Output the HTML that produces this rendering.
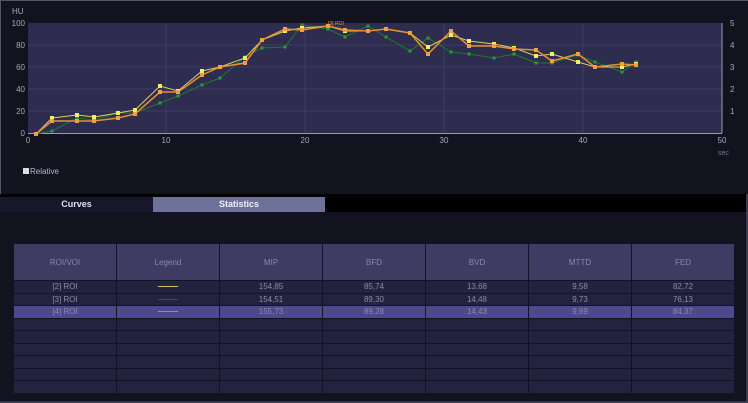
<!DOCTYPE html>
<html><head><style>
body{margin:0;width:748px;height:403px;background:#13121f;font-family:"Liberation Sans",sans-serif;position:relative;overflow:hidden;}
.a{position:absolute;}
table{border-collapse:collapse;position:absolute;left:13px;top:243px;width:722px;table-layout:fixed;}
td{border:1px solid #141326;color:#8c8aa8;font-size:8px;text-align:center;padding:0;height:11.5px;background:#23223f;}
tr.h td{background:#3e3c62;height:36px;color:#8a88a8;}
tr.s td{background:#4c4a8c;}
</style></head><body>
<div class="a" style="left:0;top:0;width:748px;height:1px;background:#55546a"></div>
<div class="a" style="left:0;top:0;width:1px;height:194px;background:#55546a"></div>
<svg class="a" style="left:0;top:0" width="748" height="194">
<defs>
<marker id="mg" markerWidth="3" markerHeight="3" refX="1.5" refY="1.5" markerUnits="userSpaceOnUse"><rect width="3" height="3" fill="#2a9a3a"/></marker>
<marker id="my" markerWidth="4" markerHeight="4" refX="2" refY="2" markerUnits="userSpaceOnUse"><rect width="4" height="4" fill="#f0f060"/></marker>
<marker id="mo" markerWidth="4" markerHeight="4" refX="2" refY="2" markerUnits="userSpaceOnUse"><rect width="4" height="4" fill="#f0a040"/></marker>
</defs>
<rect x="28" y="23" width="694" height="110" fill="#2e2d50"/>
<g stroke="#3e3d62" stroke-width="1">
<line x1="28" y1="45" x2="722" y2="45"/><line x1="28" y1="67" x2="722" y2="67"/><line x1="28" y1="89" x2="722" y2="89"/><line x1="28" y1="111" x2="722" y2="111"/>
<line x1="166" y1="23" x2="166" y2="133"/><line x1="305" y1="23" x2="305" y2="133"/><line x1="444" y1="23" x2="444" y2="133"/><line x1="583" y1="23" x2="583" y2="133"/>
</g>
<line x1="28" y1="133.5" x2="722" y2="133.5" stroke="#9a99b0"/>
<line x1="722" y1="23" x2="722" y2="133" stroke="#9a99b0"/>
<g font-size="8" fill="#a8a7bc">
<text x="12" y="14">HU</text>
<text x="25" y="26" text-anchor="end">100</text><text x="25" y="48" text-anchor="end">80</text><text x="25" y="70" text-anchor="end">60</text><text x="25" y="92" text-anchor="end">40</text><text x="25" y="114" text-anchor="end">20</text><text x="25" y="136" text-anchor="end">0</text>
<text x="730" y="26">5</text><text x="730" y="48">4</text><text x="730" y="70">3</text><text x="730" y="92">2</text><text x="730" y="114">1</text>
<text x="28" y="143" text-anchor="middle">0</text><text x="166" y="143" text-anchor="middle">10</text><text x="305" y="143" text-anchor="middle">20</text><text x="444" y="143" text-anchor="middle">30</text><text x="583" y="143" text-anchor="middle">40</text><text x="722" y="143" text-anchor="middle">50</text>
<text x="718" y="155" font-size="7" fill="#777690">sec</text>
<text x="30" y="174" fill="#b8b7c8">Relative</text>
</g>
<rect x="23" y="168" width="6" height="6" fill="#ddd"/>
<text x="328" y="25" font-size="5" fill="#e8a030">[3] ROI</text>
<polyline fill="none" stroke="#1f7a2a" stroke-width="1" marker-start="url(#mg)" marker-mid="url(#mg)" marker-end="url(#mg)" points="36,134 52,131 77,118 94,120 118,113 135,113 160,103 178,96 202,85 220,78 245,57 262,48 285,47 302,25 328,29 345,37 368,26 386,37 410,51 428,38 451,52 469,54 494,58 514,54 536,63 552,63 578,55 595,62 622,72 636,62"/>
<polyline fill="none" stroke="#d8d060" stroke-width="1" marker-mid="url(#my)" marker-end="url(#my)" points="36,134 52,118 77,115 94,117 118,113 135,110 160,86 178,91 202,71 220,67 245,58 262,40 285,31 302,28 328,26 345,31 368,31 386,29 410,33 428,47 451,35 469,41 494,44 514,48 536,56 552,54 578,62 595,67 622,67 636,64"/>
<polyline fill="none" stroke="#e89030" stroke-width="1.5" marker-start="url(#mo)" marker-mid="url(#mo)" marker-end="url(#mo)" points="36,134 52,121 77,121 94,121 118,118 135,114 160,92 178,92 202,75 220,67 245,63 262,40 285,29 302,30 328,26 345,30 368,31 386,29 410,33 428,54 451,31 469,46 494,46 514,49 536,50 552,61 578,54 595,67 622,64 636,65"/>
</svg>
<div class="a" style="left:0;top:194px;width:748px;height:18px;background:#000"></div>
<div class="a" style="left:0;top:197px;width:153px;height:15px;background:#17162b;color:#e0e0ea;font-size:9px;font-weight:bold;text-align:center;line-height:14px">Curves</div>
<div class="a" style="left:153px;top:197px;width:172px;height:15px;background:#6e7199;color:#f0f0f8;font-size:9px;font-weight:bold;text-align:center;line-height:14px">Statistics</div>
<table>
<tr class="h"><td>ROI/VOI</td><td>Legend</td><td>MIP</td><td>BFD</td><td>BVD</td><td>MTTD</td><td>FED</td></tr>
<tr><td>[2] ROI</td><td><div style="width:20px;height:1px;background:#c8c060;margin:auto"></div></td><td>154,85</td><td>85,74</td><td>13,68</td><td>9,58</td><td>82,72</td></tr>
<tr><td>[3] ROI</td><td><div style="width:20px;height:1px;background:#1f6a2a;margin:auto"></div></td><td>154,51</td><td>89,30</td><td>14,48</td><td>9,73</td><td>76,13</td></tr>
<tr class="s"><td>[4] ROI</td><td><div style="width:20px;height:1px;background:#c08070;margin:auto"></div></td><td>155,73</td><td>89,28</td><td>14,43</td><td>9,69</td><td>84,37</td></tr>
<tr><td></td><td></td><td></td><td></td><td></td><td></td><td></td></tr>
<tr><td></td><td></td><td></td><td></td><td></td><td></td><td></td></tr>
<tr><td></td><td></td><td></td><td></td><td></td><td></td><td></td></tr>
<tr><td></td><td></td><td></td><td></td><td></td><td></td><td></td></tr>
<tr><td></td><td></td><td></td><td></td><td></td><td></td><td></td></tr>
<tr><td></td><td></td><td></td><td></td><td></td><td></td><td></td></tr>
</table>
<div class="a" style="left:0;top:401px;width:748px;height:2px;background:#3a394e"></div>
<div class="a" style="left:746px;top:194px;width:2px;height:209px;background:#3a394e"></div>
</body></html>
